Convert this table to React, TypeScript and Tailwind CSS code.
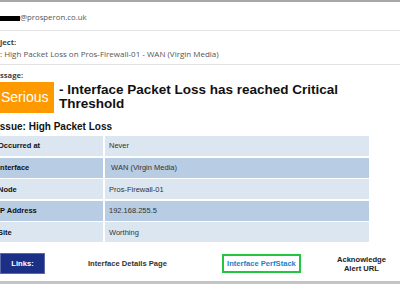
const rows = [
  { label: "Occurred at", value: "Never", dark: false },
  { label: "Interface", value: "\u00a0WAN (Virgin Media)", dark: true },
  { label: "Node", value: "Pros-Firewall-01", dark: false },
  { label: "IP Address", value: "192.168.255.5", dark: true },
  { label: "Site", value: "Worthing", dark: false },
];

export default function App() {
  return (
    <div className="w-[400px] h-[284px] overflow-hidden bg-white flex flex-col">
      <div className="h-[2px] bg-[#a8a8a8]" />

      {/* sender */}
      <div className="h-[28px] pt-[4px] flex items-center font-['Open_Sans',sans-serif] text-[7.8px] text-[#555]">
        <span className="w-[20px] h-[5px] bg-black" />
        <span>@prosperon.co.uk</span>
      </div>
      <div className="h-px bg-[#e2e2e2]" />

      {/* subject */}
      <div className="h-[33px] pt-[6px] font-['Open_Sans',sans-serif] text-[#444]">
        <div className="text-[7.6px] font-bold leading-[11px]">ject:</div>
        <div className="text-[8px] leading-[12px] text-[#555]">
          : High Packet Loss on Pros-Firewall-01 - WAN (Virgin Media)
        </div>
      </div>
      <div className="h-px bg-[#e2e2e2]" />

      {/* message */}
      <div className="pt-[5px] h-[17px] font-['Open_Sans',sans-serif] text-[7.6px] font-bold leading-[11px] text-[#444]">
        ssage:
      </div>

      <div className="flex font-['Liberation_Sans',Arial,sans-serif]">
        <div className="w-[54px] h-[31px] bg-[#ff9900] text-white text-[14px] flex items-center pl-[1px]">
          Serious
        </div>
        <div className="ml-[5px] pt-[1px] text-[13.5px] font-bold leading-[14px] text-[#111]">
          - Interface Packet Loss has reached Critical
          <br />
          Threshold
        </div>
      </div>

      <div className="-ml-[3px] mt-[8px] h-[15px] font-['Liberation_Sans',Arial,sans-serif] text-[10px] font-bold text-[#111] leading-[12px]">
        Issue: High Packet Loss
      </div>

      {/* details table */}
      <div className="-ml-[4px] w-[373px] flex flex-col gap-[1.6px] font-['Liberation_Sans',Arial,sans-serif] text-[7.5px]">
        {rows.map((r) => (
          <div key={r.label} className="flex gap-[2px] h-[20px]">
            <div
              className={`w-[107px] flex items-center pl-[2px] font-bold text-[#111] ${
                r.dark ? "bg-[#b8cce4]" : "bg-[#dce6f1]"
              }`}
            >
              {r.label}
            </div>
            <div
              className={`flex-1 flex items-center pl-[4px] text-[#333] ${
                r.dark ? "bg-[#b8cce4]" : "bg-[#dce6f1]"
              }`}
            >
              {r.value}
            </div>
          </div>
        ))}
      </div>

      {/* links */}
      <div className="mt-[11px] h-[21px] flex items-center font-['Liberation_Sans',Arial,sans-serif] text-[7.6px] font-bold">
        <div className="w-[45px] h-[21px] bg-[#1c2f86] border border-[#5868a8] text-white flex items-center justify-center">
          Links:
        </div>
        <div className="ml-[43px] text-[#333]">Interface Details Page</div>
        <div className="ml-[55px] w-[79px] h-[19px] border-2 border-[#22c53e] text-[#1e80c6] flex items-center justify-center">
          Interface PerfStack
        </div>
        <div className="ml-[36px] text-[#222] text-center leading-[9px]">
          Acknowledge
          <br />
          Alert URL
        </div>
      </div>

      <div className="mt-auto h-[3px] bg-[#c4c4c4]" />
    </div>
  );
}
